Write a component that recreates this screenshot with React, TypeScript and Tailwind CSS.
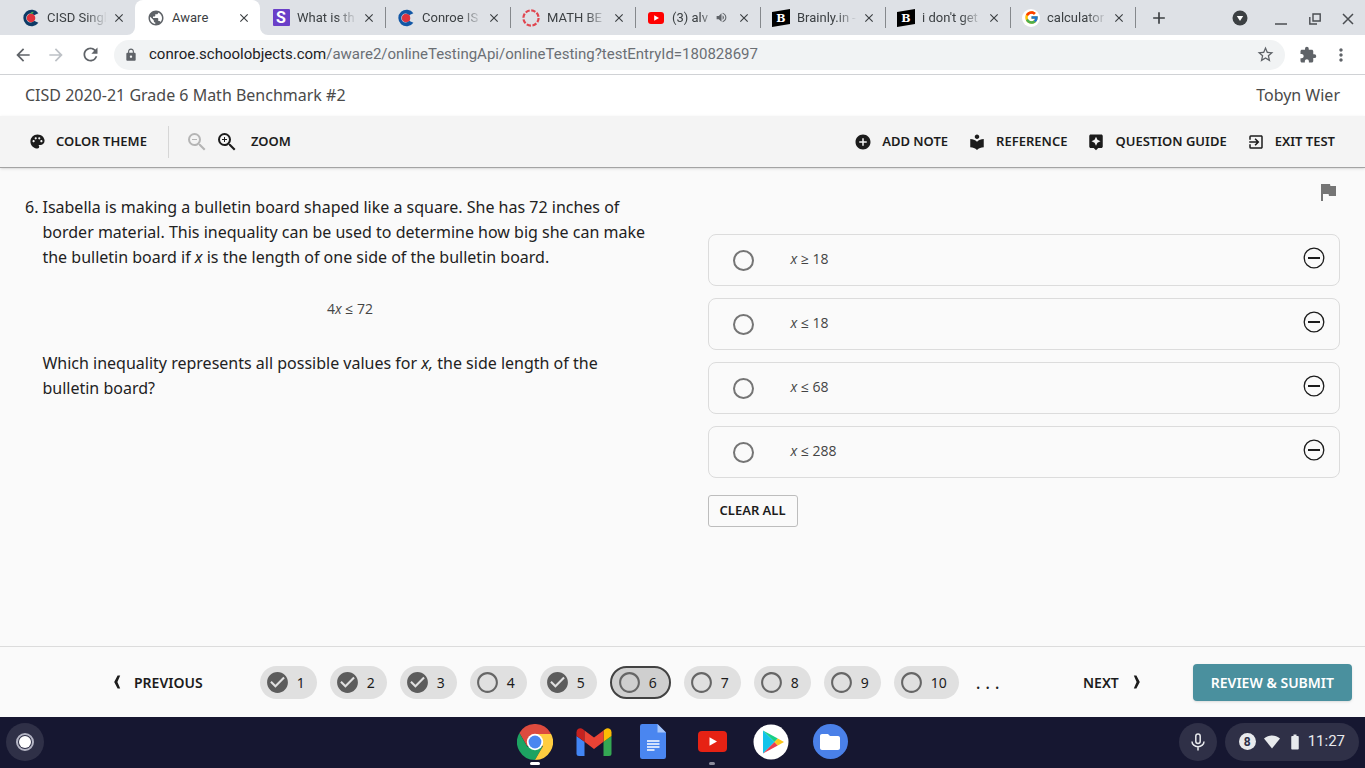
import React from "react";
import {
  MdAdd,
  MdAddCircle,
  MdArrowBack,
  MdArrowForward,
  MdAssistant,
  MdBatteryFull,
  MdCheckCircle,
  MdClose,
  MdExitToApp,
  MdExtension,
  MdFlag,
  MdFolder,
  MdLocalLibrary,
  MdLock,
  MdMoreVert,
  MdPalette,
  MdPublic,
  MdRadioButtonUnchecked,
  MdRefresh,
  MdStarBorder,
  MdVolumeUp,
  MdZoomIn,
  MdZoomOut,
} from "react-icons/md";
import { FcGoogle } from "react-icons/fc";

/* ---------- Favicons ---------- */

function ConroeIcon({ blue, apple }: { blue: string; apple?: boolean }) {
  return (
    <svg viewBox="0 0 18 18" className="size-[18px]">
      <path
        d="M16.4 4.2A8.3 8.3 0 1 0 16.4 13.8L12 11.8A4.4 4.4 0 1 1 12 6.2Z"
        fill={blue}
      />
      <circle cx="9" cy="9" r="4.3" fill={apple ? "#e0323c" : "#d63a4a"} />
      {!apple && <path d="M6 9A3 3 0 0 1 9 6H12.5V12H9A3 3 0 0 1 6 9Z" fill="#e0323c" />}
      {apple && <path d="M8.6 5C8.8 3.2 10 2.4 11.6 2.8C11.2 4.4 10.2 5.2 8.6 5Z" fill="#4caf50" />}
    </svg>
  );
}

function LetterIcon() {
  return (
    <span className="flex size-[17px] items-center justify-center rounded-[1px] bg-[#6a3fc8] text-[16px] leading-none font-bold text-white">
      S
    </span>
  );
}

function RingIcon() {
  return (
    <svg viewBox="0 0 18 18" className="size-[18px]">
      <circle cx="9" cy="9" r="7.6" fill="none" stroke="#e0454f" strokeWidth="2.2" strokeDasharray="4.4 1.57" />
    </svg>
  );
}

function VideoIcon() {
  return (
    <svg viewBox="0 0 18 18" className="size-[18px]">
      <rect x="1" y="3" width="16" height="12" rx="3" fill="#f00" />
      <path d="M7.2 6.2V11.8L12 9Z" fill="#fff" />
    </svg>
  );
}

function BrainlyIcon() {
  return (
    <svg viewBox="0 0 18 18" className="size-[18px]">
      <path d="M0 3L18 0V15L0 18Z" fill="#000" />
      <text x="9" y="13" textAnchor="middle" fontSize="11" fontWeight="700" fontFamily="DejaVu Serif, serif" fill="#fff">
        B
      </text>
    </svg>
  );
}

function GoogleIcon() {
  return (
    <span className="flex size-[18px] items-center justify-center rounded-full bg-white">
      <FcGoogle size={15} />
    </span>
  );
}

/* ---------- Browser chrome ---------- */

type Tab = { title: string; icon: React.ReactNode; audio?: boolean };

const tabs: Tab[] = [
  { title: "CISD Singl", icon: <ConroeIcon blue="#0d3b66" apple /> },
  { title: "Aware", icon: <MdPublic size={18} className="text-[#5f6368]" /> },
  { title: "What is th", icon: <LetterIcon /> },
  { title: "Conroe IS", icon: <ConroeIcon blue="#1257a6" /> },
  { title: "MATH BE", icon: <RingIcon /> },
  { title: "(3) alv", icon: <VideoIcon />, audio: true },
  { title: "Brainly.in -", icon: <BrainlyIcon /> },
  { title: "i don't get", icon: <BrainlyIcon /> },
  { title: "calculator", icon: <GoogleIcon /> },
];

function TabItem({ tab, active, divider }: { tab: Tab; active: boolean; divider: boolean }) {
  return (
    <div
      className={
        active
          ? "relative flex h-full w-[125px] items-center rounded-t-lg bg-white pr-2 pl-3"
          : "relative flex h-full w-[125px] items-center pr-2 pl-3"
      }
    >
      {active && (
        <>
          <svg viewBox="0 0 8 8" className="absolute bottom-0 -left-2 size-2">
            <path d="M8 0V8H0A8 8 0 0 0 8 0Z" fill="#fff" />
          </svg>
          <svg viewBox="0 0 8 8" className="absolute -right-2 bottom-0 size-2">
            <path d="M0 0V8H8A8 8 0 0 1 0 0Z" fill="#fff" />
          </svg>
        </>
      )}
      <a href="#" className="flex min-w-0 flex-1 items-center text-[#3c4043]">
        <span className="flex size-[18px] shrink-0 items-center justify-center">{tab.icon}</span>
        <span
          className={
            active
              ? "ml-[7px] flex-1 text-[13px] whitespace-nowrap"
              : "ml-[7px] flex-1 mask-r-from-65% mask-r-to-100% text-[13px] whitespace-nowrap"
          }
        >
          {tab.title}
        </span>
        {tab.audio && <MdVolumeUp size={13} className="mr-1 shrink-0 text-[#5f6368]" />}
      </a>
      <button aria-label="Close tab" className="ml-1 flex size-4 shrink-0 items-center justify-center text-[#3c4043]">
        <MdClose size={14} />
      </button>
      {divider && <span className="absolute top-[7px] -right-px h-[21px] w-px bg-[#85888c]" />}
    </div>
  );
}

function TabStrip() {
  return (
    <div className="flex h-[35px] items-center bg-[#dee1e6] pl-[10px]">
      {tabs.map((tab, i) => (
        <TabItem key={tab.title} tab={tab} active={i === 1} divider={i > 1} />
      ))}
      <button aria-label="New tab" className="ml-[14px] text-[#3c4043]">
        <MdAdd size={20} />
      </button>
      <div className="mr-[11px] ml-auto flex items-center text-[#4a4d51]">
        <button aria-label="Search tabs" className="mr-[27px]">
          <svg viewBox="0 0 16 16" className="size-4">
            <circle cx="8" cy="8" r="7.5" fill="#3c4043" />
            <path d="M4.8 6H11.2L8 11Z" fill="#fff" />
          </svg>
        </button>
        <button aria-label="Minimize" className="mr-[22px]">
          <svg viewBox="0 0 12 16" className="h-4 w-3">
            <path d="M0 14H12" stroke="currentColor" strokeWidth="1.5" />
          </svg>
        </button>
        <button aria-label="Restore" className="mr-[21px]">
          <svg viewBox="0 0 12 16" className="h-4 w-3" fill="none" stroke="currentColor" strokeWidth="1.4">
            <path d="M4 4H11.2V11H4ZM0.8 7V14H8" />
          </svg>
        </button>
        <button aria-label="Close window">
          <svg viewBox="0 0 12 16" className="h-4 w-3">
            <path d="M1 4L11 14M11 4L1 14" stroke="currentColor" strokeWidth="1.5" />
          </svg>
        </button>
      </div>
    </div>
  );
}

function AddressBar() {
  return (
    <div className="flex h-10 items-center border-b border-[#d0d2d5] bg-white pr-[14px] pl-[13px] text-[#5f6368]">
      <button aria-label="Back">
        <MdArrowBack size={20} />
      </button>
      <button aria-label="Forward" className="ml-[13px] text-[#bdc1c6]">
        <MdArrowForward size={20} />
      </button>
      <button aria-label="Reload" className="ml-[14px]">
        <MdRefresh size={21} />
      </button>
      <div className="ml-[13px] flex h-[30px] flex-1 items-center rounded-full bg-[#f1f3f4] pr-[10px] pl-[10px]">
        <MdLock size={14} />
        <a href="#" className="ml-[11px] text-[15px] text-[#6b6f74]">
          <span className="text-[#202124]">conroe.schoolobjects.com</span>
          /aware2/onlineTestingApi/onlineTesting?testEntryId=180828697
        </a>
        <button aria-label="Bookmark" className="ml-auto">
          <MdStarBorder size={19} />
        </button>
      </div>
      <button aria-label="Extensions" className="ml-[14px]">
        <MdExtension size={18} />
      </button>
      <button aria-label="Menu" className="ml-[14px]">
        <MdMoreVert size={20} />
      </button>
    </div>
  );
}

/* ---------- Test page ---------- */

function ToolButton({ icon, label }: { icon: React.ReactNode; label: string }) {
  return (
    <button className="flex items-center gap-[10px]">
      {icon}
      {label}
    </button>
  );
}

function TestHeader() {
  return (
    <header>
      <div className="flex h-[41px] items-center justify-between bg-white px-[25px] pb-[2px] text-[16px] text-[#4a4a4a]">
        <h1>CISD 2020-21 Grade 6 Math Benchmark #2</h1>
        <span>Tobyn Wier</span>
      </div>
      <div className="flex h-[52px] items-center border-b border-[#a3a3a3] bg-[#f4f4f4] pr-[30px] pl-[29px] text-[13px] font-semibold text-[#1c1c1c] shadow-sm">
        <button className="flex items-center gap-[10px]">
          <MdPalette size={17} />
          COLOR THEME
        </button>
        <span className="ml-[21px] h-8 w-px bg-[#d6d6d6]" />
        <button aria-label="Zoom out" className="ml-4 text-[#b5b5b5]">
          <MdZoomOut size={24} />
        </button>
        <button className="ml-[6px] flex items-center gap-3">
          <MdZoomIn size={24} />
          ZOOM
        </button>
        <div className="ml-auto flex items-center gap-5">
          <ToolButton icon={<MdAddCircle size={18} />} label="ADD NOTE" />
          <ToolButton icon={<MdLocalLibrary size={18} />} label="REFERENCE" />
          <ToolButton icon={<MdAssistant size={18} />} label="QUESTION GUIDE" />
          <ToolButton icon={<MdExitToApp size={18} />} label="EXIT TEST" />
        </div>
      </div>
    </header>
  );
}

function Question() {
  return (
    <section className="flex flex-1 gap-1 pt-[27px] text-[16px] leading-[25px] text-[#222]">
      <span>6.</span>
      <div className="flex-1">
        <p>
          Isabella is making a bulletin board shaped like a square. She has 72 inches of
          <br />
          border material. This inequality can be used to determine how big she can make
          <br />
          the bulletin board if <i>x</i> is the length of one side of the bulletin board.
        </p>
        <p className="mt-[26px] mb-[30px] text-center font-['Open_Sans',sans-serif] text-[14px] font-medium text-[#444]">
          4<i>x</i> ≤ 72
        </p>
        <p>
          Which inequality represents all possible values for <i>x,</i> the side length of the
          <br />
          bulletin board?
        </p>
      </div>
    </section>
  );
}

const options = ["≥ 18", "≤ 18", "≤ 68", "≤ 288"];

function Answers() {
  return (
    <section className="flex flex-1 flex-col items-start">
      <button aria-label="Flag question" className="mt-3 mb-[30px] self-end text-[#757575]">
        <MdFlag size={24} />
      </button>
      <div className="flex w-full flex-col gap-3">
        {options.map((option, i) => (
          <div key={option} className="flex h-[52px] items-center rounded-lg border border-[#dcdcdc] pr-[14px] pl-6">
            <input
              type="radio"
              name="answer"
              id={`answer-${i}`}
              className="size-[21px] appearance-none rounded-full border-2 border-[#757575]"
            />
            <label
              htmlFor={`answer-${i}`}
              className="flex-1 pb-1 pl-[37px] font-['Open_Sans',sans-serif] text-[14px] font-medium text-[#444]"
            >
              <i>x</i> {option}
            </label>
            <button aria-label="Eliminate answer" className="pb-1">
              <svg viewBox="0 0 22 22" className="size-[22px]" fill="none" stroke="#1c1c1c">
                <circle cx="11" cy="11" r="9.8" strokeWidth="1.3" />
                <path d="M5 11H17" strokeWidth="2" />
              </svg>
            </button>
          </div>
        ))}
      </div>
      <button className="mt-[17px] h-8 rounded-[3px] border border-[#bdbdbd] px-[11px] text-[13px] font-semibold text-[#1c1c1c]">
        CLEAR ALL
      </button>
    </section>
  );
}

const steps = [
  { n: 1, done: true },
  { n: 2, done: true },
  { n: 3, done: true },
  { n: 4, done: false },
  { n: 5, done: true },
  { n: 6, done: false },
  { n: 7, done: false },
  { n: 8, done: false },
  { n: 9, done: false },
  { n: 10, done: false },
];

function Chevron({ flip }: { flip?: boolean }) {
  return (
    <svg viewBox="0 0 8 14" className={flip ? "h-[14px] w-2 rotate-180" : "h-[14px] w-2"}>
      <path d="M4.6 0.5H7.2L4.4 7L7.2 13.5H4.6L1.2 7Z" fill="#1c1c1c" />
    </svg>
  );
}

function TestFooter() {
  return (
    <footer className="flex h-[71px] items-center border-t border-[#dcdcdc] pr-[13px] pl-[113px] text-[14px] font-semibold text-[#1c1c1c]">
      <button className="flex items-center gap-[13px]">
        <Chevron />
        PREVIOUS
      </button>
      <nav className="ml-[57px] flex items-center gap-[13px] font-normal">
        {steps.map(({ n, done }) => (
          <button
            key={n}
            className={
              n === 6
                ? "flex h-[33px] items-center gap-2 rounded-full border-2 border-[#424242] bg-[#cfcfcf] pr-3 pl-[5px]"
                : "flex h-[33px] items-center gap-2 rounded-full bg-[#e0e0e0] pr-3 pl-[5px]"
            }
          >
            {done ? (
              <MdCheckCircle size={25} className="-mr-[1px] text-[#5c5c5c]" />
            ) : (
              <MdRadioButtonUnchecked size={25} className="-mr-[1px] text-[#666]" />
            )}
            {n}
          </button>
        ))}
        <span className="ml-[4px] text-[18px]">. . .</span>
      </nav>
      <button className="ml-auto flex items-center gap-[14px]">
        NEXT
        <Chevron flip />
      </button>
      <button className="ml-[52px] h-[37px] rounded-[4px] bg-[#4a909e] px-[18px] text-white shadow-sm">
        REVIEW &amp; SUBMIT
      </button>
    </footer>
  );
}

/* ---------- Shelf ---------- */

function ChromeIcon() {
  return (
    <svg viewBox="0 0 36 36" className="size-9">
      <path d="M2.4 9A18 18 0 0 1 33.6 9L33.6 9.9H18L10.2 22.5Z" fill="#dd4b3e" />
      <path d="M2.4 9A18 18 0 0 0 18 36L25.8 22.5H10.2Z" fill="#1da362" />
      <path d="M33.6 9A18 18 0 0 1 18 36L25.8 22.5L18 9.9H33.9Z" fill="#ffcd40" />
      <circle cx="18" cy="18" r="8.2" fill="#fff" />
      <circle cx="18" cy="18" r="6.4" fill="#4a86f0" />
    </svg>
  );
}

function GmailIcon() {
  return (
    <svg viewBox="0 0 36 28" className="h-7 w-9">
      <path d="M0.5 8V25.5A2.5 2.5 0 0 0 3 28H8.5V13.8Z" fill="#4285f4" />
      <path d="M35.5 8V25.5A2.5 2.5 0 0 1 33 28H27.5V13.8Z" fill="#34a853" />
      <path d="M8.5 13.8L0.5 8V4.2C0.5 0.6 4.4 -0.8 7 1.2L8.5 2.4Z" fill="#c5221f" />
      <path d="M27.5 13.8L35.5 8V4.2C35.5 0.6 31.6 -0.8 29 1.2L27.5 2.4Z" fill="#fbbc04" />
      <path d="M8.5 2.4L18 9.6L27.5 2.4V13.8L18 21L8.5 13.8Z" fill="#ea4335" />
    </svg>
  );
}

function DocsIcon() {
  return (
    <svg viewBox="0 0 26 35" className="h-[35px] w-[26px]">
      <path d="M2.2 0H17.5L26 8.5V32.8A2.2 2.2 0 0 1 23.8 35H2.2A2.2 2.2 0 0 1 0 32.8V2.2A2.2 2.2 0 0 1 2.2 0Z" fill="#4a86f0" />
      <path d="M17.5 0L26 8.5H17.5Z" fill="#a8c7fa" />
      <path d="M7 17H19.5M7 20H19.5M7 23H19.5M7 26H14.5" stroke="#fff" strokeWidth="1.4" />
    </svg>
  );
}

function YoutubeIcon() {
  return (
    <svg viewBox="0 0 29 21" className="h-[21px] w-[29px]">
      <rect width="29" height="21" rx="4" fill="#e62214" />
      <path d="M11.5 6.2V14.8L19 10.5Z" fill="#fff" />
    </svg>
  );
}

function PlayIcon() {
  return (
    <svg viewBox="0 0 36 36" className="size-9">
      <circle cx="18" cy="18" r="17.5" fill="#fff" />
      <path d="M10 6.5V29.5L21.5 18Z" fill="#12c4ea" />
      <path d="M10 6.5L24.8 14.6L21.5 18Z" fill="#19cf86" />
      <path d="M10 29.5L24.8 21.4L21.5 18Z" fill="#ea3d4f" />
      <path d="M24.8 14.6L31 18L24.8 21.4L21.5 18Z" fill="#fbc51b" />
    </svg>
  );
}

function FilesIcon() {
  return (
    <span className="flex size-[35px] items-center justify-center rounded-full bg-[#4a80e8] text-white">
      <MdFolder size={24} />
    </span>
  );
}

const apps = [
  { name: "Chrome", icon: <ChromeIcon />, bar: "absolute -bottom-[5px] h-[3px] w-[10px] rounded-full bg-white" },
  { name: "Gmail", icon: <GmailIcon /> },
  { name: "Docs", icon: <DocsIcon /> },
  { name: "YouTube", icon: <YoutubeIcon />, bar: "absolute -bottom-[5px] h-[3px] w-[6px] rounded-full bg-[#8b8b9b]" },
  { name: "Play Store", icon: <PlayIcon /> },
  { name: "Files", icon: <FilesIcon /> },
];

function Shelf() {
  return (
    <div className="grid h-[51px] grid-cols-[1fr_auto_1fr] items-center bg-[#161731] px-[6px] pb-[2px] font-[Roboto,sans-serif]">
      <button aria-label="Launcher" className="flex size-[38px] items-center justify-center rounded-full bg-[#2f3047]">
        <svg viewBox="0 0 20 20" className="size-5">
          <circle cx="10" cy="10" r="8" fill="none" stroke="#b4b5c4" strokeWidth="2" />
          <circle cx="10" cy="10" r="6" fill="#fff" />
        </svg>
      </button>
      <div className="flex items-center gap-[23px]">
        {apps.map((app) => (
          <button key={app.name} aria-label={app.name} className="relative flex size-9 items-center justify-center">
            {app.icon}
            {app.bar && <span className={app.bar} />}
          </button>
        ))}
      </div>
      <div className="flex items-center justify-end gap-2 text-[#e8eaed]">
        <button aria-label="Microphone" className="flex size-[38px] items-center justify-center rounded-full bg-[#2f3047]">
          <svg viewBox="0 0 14 18" className="h-[18px] w-[14px]" fill="none" stroke="currentColor" strokeWidth="1.5">
            <rect x="4.8" y="1" width="4.4" height="9.5" rx="2.2" />
            <path d="M1 8.5A6 5.2 0 0 0 13 8.5M7 13.7V17.5" />
          </svg>
        </button>
        <button className="flex h-[38px] items-center rounded-full bg-[#2f3047] pr-[14px] pl-[14px]">
          <span className="flex size-[17px] items-center justify-center rounded-full bg-[#e8eaed] text-[12px] leading-none font-bold text-[#2f3047]">
            8
          </span>
          <svg viewBox="0 0 16 14" className="ml-2 h-[14px] w-4">
            <path d="M0 3.6C4.6 -0.4 11.4 -0.4 16 3.6L8 13.6Z" fill="currentColor" />
          </svg>
          <MdBatteryFull size={18} className="ml-[6px]" />
          <span className="ml-1 text-[15px]">11:27</span>
        </button>
      </div>
    </div>
  );
}

export default function App() {
  return (
    <div className="flex min-h-screen flex-col bg-[#fafafa] font-['Noto_Sans',sans-serif]">
      <div className="font-[Roboto,sans-serif]">
        <TabStrip />
        <AddressBar />
      </div>
      <TestHeader />
      <main className="flex flex-1 gap-[50px] px-[25px]">
        <Question />
        <Answers />
      </main>
      <TestFooter />
      <Shelf />
    </div>
  );
}
